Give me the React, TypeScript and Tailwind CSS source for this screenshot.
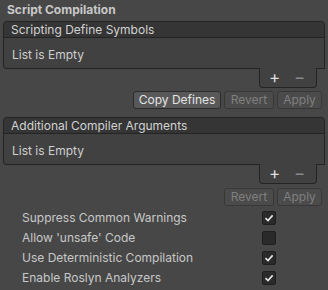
import { Fragment } from "react";

type ListProps = {
  title: string;
};

const ReorderableList = ({ title }: ListProps) => {
  return (
    <div className="mx-[3px] flex flex-col">
      <div className="flex h-[17px] items-center rounded-t-[4px] border border-[#242424] bg-[#353535] pl-[7px] text-[#d2d2d2]">
        {title}
      </div>
      <div className="flex h-[31px] items-center rounded-bl-[4px] border-x border-b border-[#242424] bg-[#414141] pl-[8px] pt-[4px] text-[#cfcfcf]">
        List is Empty
      </div>
      <div className="flex justify-end pr-[8px]">
        <div className="-mt-px flex h-[20px] w-[58px] items-center justify-around rounded-b-[4px] border-x border-b border-[#242424] bg-[#414141] pl-[2px] pr-[4px]">
          <span className="text-[17px] leading-none text-[#dcdcdc]">+</span>
          <span className="text-[17px] leading-none text-[#8a8a8a]">−</span>
        </div>
      </div>
    </div>
  );
};

type BtnProps = {
  label: string;
  width: string;
  disabled?: boolean;
};

const Btn = ({ label, width, disabled = false }: BtnProps) => (
  <div
    className={
      disabled
        ? `flex h-[18px] items-center justify-center rounded-[3px] border border-[#383838] bg-[#4b4b4b] text-[#7f7f7f] ${width}`
        : `flex h-[18px] items-center justify-center rounded-[3px] border border-[#2c2c2c] bg-[#585858] text-[#e4e4e4] ${width}`
    }
  >
    {label}
  </div>
);

const Check = ({ checked }: { checked: boolean }) => (
  <div className="flex h-[14px] w-[14px] items-center justify-center rounded-[2px] border border-[#1f1f1f] bg-[#2a2a2a]">
    {checked && (
      <svg width="10" height="10" viewBox="0 0 10 10">
        <path
          d="M1.5 5.2 L4 7.5 L8.6 2.4"
          fill="none"
          stroke="#e6e6e6"
          strokeWidth="1.6"
        />
      </svg>
    )}
  </div>
);

const options = [
  { label: "Suppress Common Warnings", checked: true },
  { label: "Allow 'unsafe' Code", checked: false },
  { label: "Use Deterministic Compilation", checked: true },
  { label: "Enable Roslyn Analyzers", checked: true },
];

export default function App() {
  return (
    <div className="flex h-[290px] w-[328px] flex-col overflow-hidden bg-[#474747] text-[12px] leading-none font-['Inter','Noto_Sans',sans-serif]">
      <div className="flex h-[21px] items-center pl-[7px] pb-[1px] font-bold text-[#c8c8c8]">
        Script Compilation
      </div>
      <ReorderableList title="Scripting Define Symbols" />
      <div className="mt-[3px] flex justify-end gap-[3px] pr-[6px]">
        <Btn label="Copy Defines" width="w-[88px]" />
        <Btn label="Revert" width="w-[50px]" disabled />
        <Btn label="Apply" width="w-[45px]" disabled />
      </div>
      <div className="mt-[8px]">
        <ReorderableList title="Additional Compiler Arguments" />
      </div>
      <div className="mt-[4px] flex justify-end gap-[3px] pr-[6px]">
        <Btn label="Revert" width="w-[50px]" disabled />
        <Btn label="Apply" width="w-[45px]" disabled />
      </div>
      <div className="mt-[2px] flex flex-col">
        {options.map((o) => (
          <Fragment key={o.label}>
            <div className="flex h-[20px] items-center justify-between pl-[22px] pr-[52px] text-[#c8c8c8]">
              <span>{o.label}</span>
              <Check checked={o.checked} />
            </div>
          </Fragment>
        ))}
      </div>
    </div>
  );
}
